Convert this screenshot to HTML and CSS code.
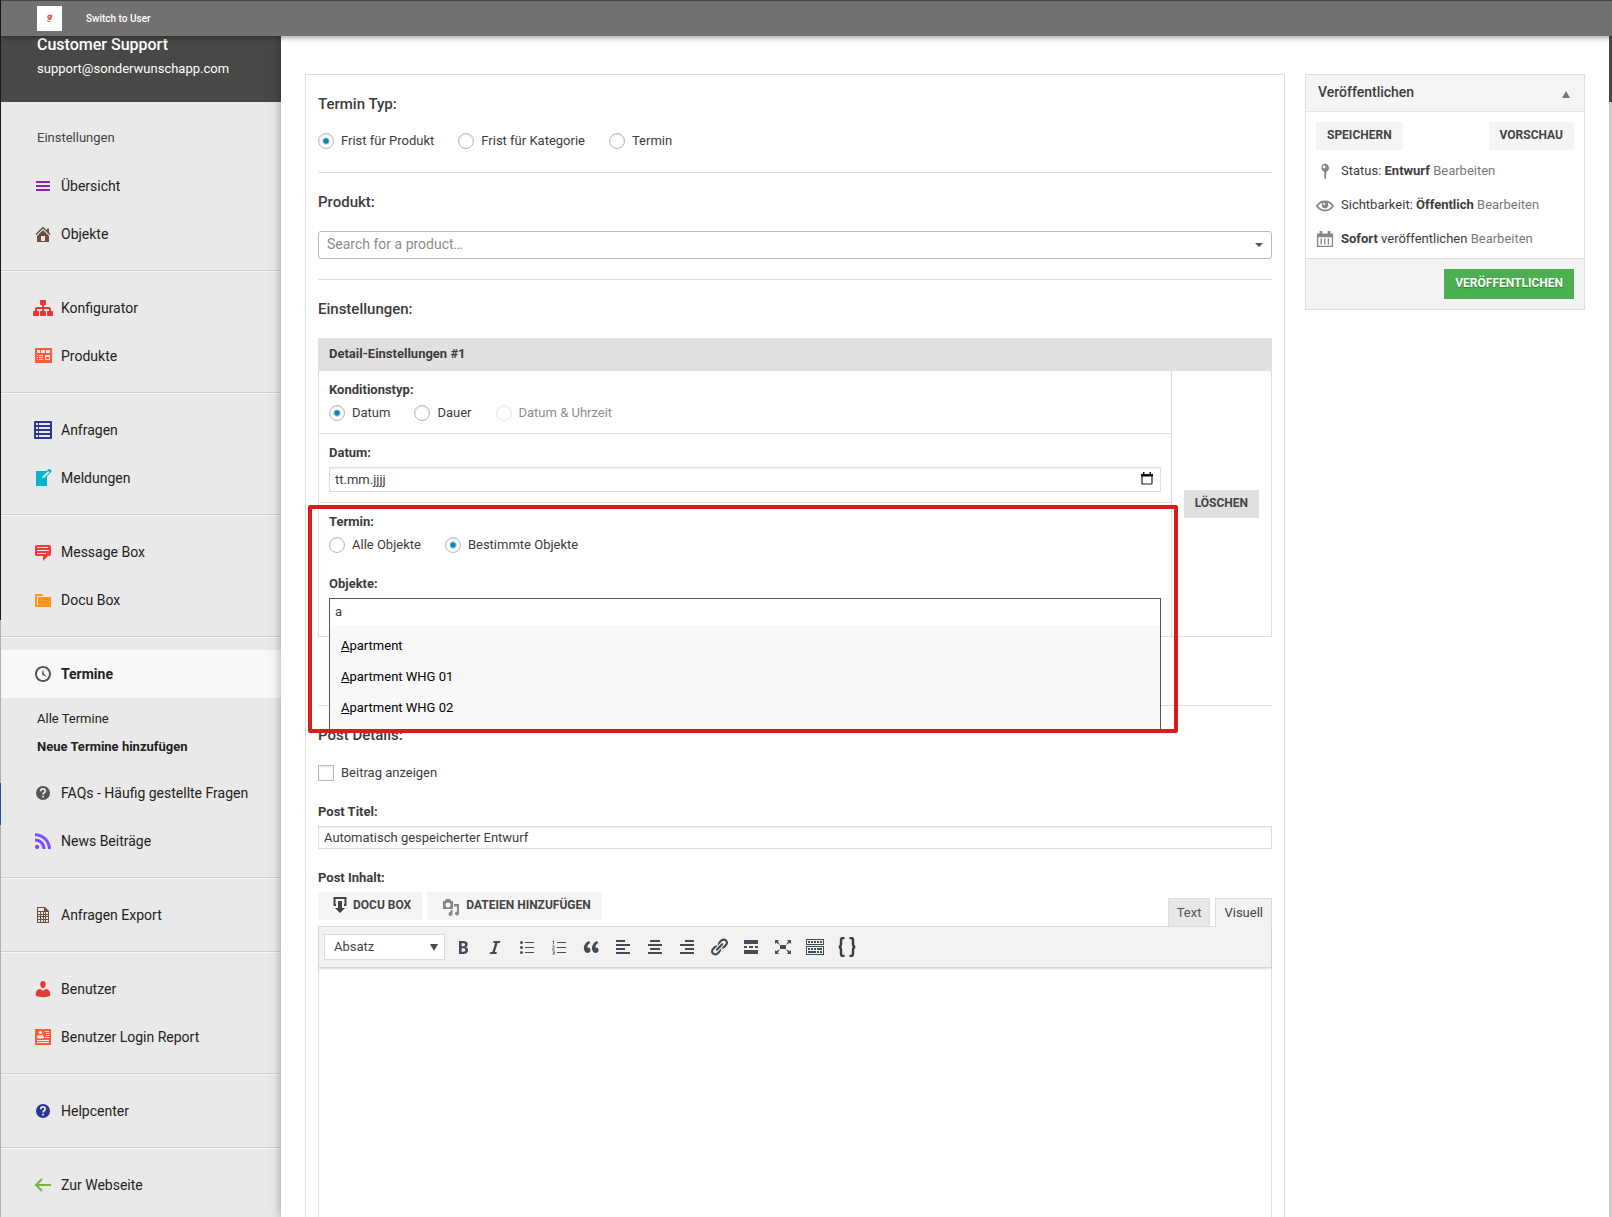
FILE: index.html
```html
<!DOCTYPE html>
<html lang="de">
<head>
<meta charset="utf-8">
<title>Termine</title>
<link rel="stylesheet" href="styles.css">
</head>
<body>
<header class="topbar">
  <a class="logo" href="#" aria-label="Startseite">
    <svg width="25" height="25" viewBox="0 0 25 25"><path d="M10.500 12l1-2.500h3l-.5 2.500-2.500 1" fill="none" stroke="#e5554f" stroke-width="1.400"/><path d="M11 12.500l3-2" stroke="#e5554f"/><path d="M10.500 14.500c1-1.500 3.500-1.500 3.500-.500M10.500 15.500h3" fill="none" stroke="#888" stroke-width="1.100"/></svg>
  </a>
  <a class="switch" href="#">Switch to User</a>
</header>
<div class="app">
  <nav class="sidebar">
    <div class="user">
      <strong class="user-name">Customer Support</strong>
      <span class="user-mail">support@sonderwunschapp.com</span>
    </div>
    <div class="nav-title">Einstellungen</div>
    <div class="group first">
      <a class="item" href="#"><svg class="ico" viewBox="0 0 20 20" fill="#8e24aa"><path d="M3 5h14v2H3zM3 9h14v2H3zM3 13h14v2H3z"/></svg>Übersicht</a>
      <a class="item" href="#"><svg class="ico" viewBox="0 0 20 20" fill="#6d4c41"><path d="M16 8.500l1.530 1.530-1.060 1.060L10 4.600l-6.470 6.490-1.060-1.060L10 2.500l4 4v-2h2v4zm-6-2.460l6 5.990V18H4v-5.970zM12 17v-5H8v5h4z"/></svg>Objekte</a>
    </div>
    <div class="group">
      <a class="item" href="#"><svg class="ico" viewBox="0 0 20 20" fill="#e53935"><path d="M18 13h1c.55 0 1 .45 1 1.010v2.980c0 .56-.45 1.010-1 1.010h-4c-.55 0-1-.45-1-1.010v-2.980c0-.56.45-1.010 1-1.010h1v-2h-5v2h1c.55 0 1 .45 1 1.010v2.980c0 .56-.45 1.010-1 1.010H8c-.55 0-1-.45-1-1.010v-2.980c0-.56.45-1.010 1-1.010h1v-2H4v2h1c.55 0 1 .45 1 1.010v2.980C6 17.550 5.550 18 5 18H1c-.55 0-1-.45-1-1.010v-2.980C0 13.450.45 13 1 13h1v-2c0-1.100.9-2 2-2h5V7H8c-.55 0-1-.45-1-1.010V3.010C7 2.450 7.450 2 8 2h4c.55 0 1 .45 1 1.010v2.980C13 6.550 12.550 7 12 7h-1v2h5c1.100 0 2 .9 2 2v2z"/></svg>Konfigurator</a>
      <a class="item" href="#"><svg class="ico" viewBox="0 0 20 20" fill="#ff5c35" fill-rule="evenodd"><path d="M2 2h17v15H2zM4 4v3h3V4zM8 4v3h4V4zM13 4v3h4V4zM4 9v1h1V9zM6 9v1h4V9zM4 11v1h1v-1zM6 11v1h4v-1zM4 13v1h1v-1zM6 13v1h4v-1zM12 9v5h5V9zM13 11h3v2h-3z"/></svg>Produkte</a>
    </div>
    <div class="group">
      <a class="item" href="#"><svg class="ico" viewBox="0 0 20 20" fill="#283593" fill-rule="evenodd"><path d="M1 2q0-1 1-1h16q1 0 1 1v16q0 1-1 1H2q-1 0-1-1zM3 3v2h2V3zM6 3v2h11V3zM3 7v2h2V7zM6 7v2h11V7zM3 11v2h2v-2zM6 11v2h11v-2zM3 15v2h2v-2zM6 15v2h11v-2z"/></svg>Anfragen</a>
      <a class="item" href="#"><svg class="ico" viewBox="0 0 20 20" fill="#00b4d0"><path d="M16.890 1.200l1.410 1.410c.39.39.39 1.020 0 1.410L14 8.330V18H3V3h10.670l1.800-1.800c.4-.39 1.030-.4 1.420 0zm-5.660 8.480l5.370-5.360-1.420-1.420-5.360 5.370-.71 2.120z"/></svg>Meldungen</a>
    </div>
    <div class="group">
      <a class="item" href="#"><svg class="ico" viewBox="0 0 20 20" fill="#f93a34"><path d="M4 3h12c.55 0 1.020.2 1.410.59S18 4.450 18 5v7c0 .55-.2 1.020-.59 1.410S16.550 14 16 14h-1l-5 5v-5H4c-.55 0-1.020-.2-1.410-.59S2 12.550 2 12V5c0-.55.2-1.020.59-1.410S3.450 3 4 3zm11 2H4v1h11V5zm1 3H4v1h12V8zm-3 3H4v1h9v-1z"/></svg>Message Box</a>
      <a class="item" href="#"><svg class="ico" viewBox="0 0 20 20" fill="#ff9320"><path d="M5 7h13v10H2V4h7l2 2H4v9h1V7z"/></svg>Docu Box</a>
    </div>
    <div class="group">
      <a class="item active" href="#"><svg class="ico" viewBox="0 0 20 20" fill="#555"><path d="M10 2c4.420 0 8 3.580 8 8s-3.580 8-8 8-8-3.580-8-8 3.580-8 8-8zm0 14c3.310 0 6-2.690 6-6s-2.690-6-6-6-6 2.690-6 6 2.690 6 6 6zm-.71-5.290c.07.05.14.1.23.15l-.02.02L14 13l-3.030-3.190L10 5l-.97 4.810h.01c0 .02-.01.05-.02.09S9 9.970 9 10c0 .28.1.52.29.71z"/></svg>Termine</a>
      <div class="submenu">
        <a href="#">Alle Termine</a>
        <a class="current" href="#">Neue Termine hinzufügen</a>
      </div>
      <a class="item" href="#"><svg class="ico" viewBox="0 0 20 20"><circle cx="10" cy="10" r="7" fill="#555"/><path d="M7.700 8.200C7.700 5.200 12.400 5.300 12.300 8c0 1.600-2.200 1.600-2.200 3.400M10.100 12.700v1.700" fill="none" stroke="#e9e9e9" stroke-width="1.800"/></svg>FAQs - Häufig gestellte Fragen</a>
      <a class="item" href="#"><svg class="ico" viewBox="0 0 20 20" fill="#7c4dff"><path d="M14.920 18H18C18 9.320 10.820 2.250 2 2.250v3.020c7.120 0 12.920 5.710 12.920 12.730zm-5.440 0h3.080C12.560 12.270 7.820 7.600 2 7.600v3.020c2 0 3.870.77 5.290 2.160C8.700 14.170 9.480 16.030 9.480 18zm-5.350-.02c1.170 0 2.130-.93 2.130-2.090 0-1.150-.96-2.090-2.130-2.090-1.180 0-2.130.94-2.130 2.090 0 1.160.95 2.090 2.130 2.090z"/></svg>News Beiträge</a>
    </div>
    <div class="group">
      <a class="item" href="#"><svg class="ico" viewBox="0 0 20 20" fill="#6d4c41" fill-rule="evenodd"><path d="M4 2h8l4 4v12H4zM5 3v3h6V3zM5 7v2h2V7zM8 7v2h2V7zM11 7v2h1V7zM13 7v2h2V7zM5 10v1h2v-1zM8 10v1h2v-1zM11 10v1h1v-1zM13 10v1h2v-1zM5 12v2h2v-2zM8 12v2h2v-2zM11 12v2h1v-2zM13 12v2h2v-2zM5 15v2h2v-2zM8 15v2h2v-2zM11 15v2h1v-2zM13 15v2h2v-2z"/></svg>Anfragen Export</a>
    </div>
    <div class="group">
      <a class="item" href="#"><svg class="ico" viewBox="0 0 20 20" fill="#e53935"><path d="M10 9.250c-2.270 0-2.730-3.440-2.730-3.440C7 4.020 7.820 2 9.970 2c2.160 0 2.980 2.020 2.710 3.810 0 0-.41 3.440-2.680 3.440zm0 2.570L12.720 10c2.390 0 4.520 2.330 4.520 4.530v2.490s-3.650 1.130-7.240 1.130c-3.650 0-7.240-1.130-7.240-1.130v-2.490c0-2.250 1.940-4.480 4.470-4.480z"/></svg>Benutzer</a>
      <a class="item" href="#"><svg class="ico" viewBox="0 0 20 20"><path fill="#ff5c35" d="M2 2h16v16H2z"/><g fill="#f5e9e6"><circle cx="7.500" cy="5.500" r="1.700"/><path d="M4 11c0-3 2-3.300 3.500-2.500C9 7.700 11 8 11 11c-2 1-5 1-7 0zM12 4h4v1h-4zM13 6h3v1h-3zM13 8h3v1h-3zM12 10h4v1h-4zM4 13h12v1H4zM4 15h12v1H4z"/></g></svg>Benutzer Login Report</a>
    </div>
    <div class="group">
      <a class="item" href="#"><svg class="ico" viewBox="0 0 20 20"><circle cx="10" cy="10" r="7" fill="#283593"/><path d="M7.700 8.200C7.700 5.200 12.400 5.300 12.300 8c0 1.600-2.200 1.600-2.200 3.400M10.100 12.700v1.700" fill="none" stroke="#e9e9e9" stroke-width="1.800"/></svg>Helpcenter</a>
    </div>
    <div class="group last">
      <a class="item" href="#"><svg class="ico" viewBox="0 0 20 20"><path d="M9 4l-6 6 6 6M3 10h15" fill="none" stroke="#7cb342" stroke-width="2"/></svg>Zur Webseite</a>
    </div>
  </nav>

  <main class="content">
    <section class="panel">
      <h2>Termin Typ:</h2>
      <div class="choices">
        <label><input type="radio" name="typ" checked>Frist für Produkt</label>
        <label><input type="radio" name="typ">Frist für Kategorie</label>
        <label><input type="radio" name="typ">Termin</label>
      </div>
      <hr>
      <h2 id="produkt">Produkt:</h2>
      <div class="product">
        <select aria-labelledby="produkt"><option>Search for a product…</option></select>
        <svg class="caret" width="8" height="4" viewBox="0 0 8 4"><path d="M0 0h8L4 4z" fill="#555"/></svg>
      </div>
      <hr>
      <h2>Einstellungen:</h2>
      <div class="detail">
        <h3>Detail-Einstellungen #1</h3>
        <div class="detail-body">
          <div class="fields">
            <div class="field">
              <div class="label">Konditionstyp:</div>
              <div class="choices">
                <label><input type="radio" name="kond" checked>Datum</label>
                <label><input type="radio" name="kond">Dauer</label>
                <label class="off"><input type="radio" name="kond" disabled>Datum &amp; Uhrzeit</label>
              </div>
            </div>
            <div class="field">
              <label class="label" for="datum">Datum:</label>
              <div class="date">
                <input id="datum" type="text" value="tt.mm.jjjj">
                <svg width="12" height="13" viewBox="0 0 12 13"><path d="M1 2.500h10V11q0 1-1 1H2q-1 0-1-1z" fill="none" stroke="#222" stroke-width="1.200"/><path d="M0 2h12v2.500H0zM2 0h1.500v2H2zM8.500 0H10v2H8.500z" fill="#111"/></svg>
              </div>
            </div>
            <div class="field objects">
              <div class="label">Termin:</div>
              <div class="choices">
                <label><input type="radio" name="obj">Alle Objekte</label>
                <label><input type="radio" name="obj" checked>Bestimmte Objekte</label>
              </div>
              <label class="label second" for="objekte">Objekte:</label>
              <div class="combo">
                <input id="objekte" type="text" value="a">
                <ul class="options">
                  <li><u>A</u>partment</li>
                  <li><u>A</u>partment WHG 01</li>
                  <li><u>A</u>partment WHG 02</li>
                </ul>
              </div>
              <div class="marker"></div>
            </div>
          </div>
          <div class="actions"><button class="btn dark" type="button">Löschen</button></div>
        </div>
      </div>
      <hr class="wide">
      <h2>Post Details:</h2>
      <label class="check"><input type="checkbox">Beitrag anzeigen</label>
      <label class="label" for="titel">Post Titel:</label>
      <input id="titel" class="title" type="text" value="Automatisch gespeicherter Entwurf">
      <label class="label inhalt" for="inhalt">Post Inhalt:</label>
      <div class="media">
        <button class="btn" type="button"><svg width="14" height="18" viewBox="0 0 14 18"><path d="M3 9H1.500V2h11v7H11" fill="none" stroke="#444" stroke-width="2"/><path d="M5 5h4v7h3l-5 5-5-5h3z" fill="#444"/></svg>Docu Box</button>
        <button class="btn" type="button"><svg class="cam" width="18" height="18" viewBox="0 0 18 18"><path fill="#82878c" fill-rule="evenodd" d="M1 3h2l1-2h4l1 2h2v8H1zM6 4.500a2.500 2.500 0 1 0 .01 0z"/><path fill="#82878c" d="M12 6h5v9.500a2 2 0 1 1-2-2V8.500h-3zM10.500 12v4a2 2 0 1 1-2-2V12z"/></svg>Dateien hinzufügen</button>
        <div class="tabs">
          <button class="tab" type="button">Text</button>
          <button class="tab on" type="button">Visuell</button>
        </div>
      </div>
      <div class="editor">
        <div class="toolbar">
          <div class="format">
            <select aria-label="Format"><option>Absatz</option></select>
            <svg class="caret" width="8" height="7" viewBox="0 0 8 7"><path d="M0 0h8L4 7z" fill="#444d55"/></svg>
          </div>
          <button type="button" aria-label="Fett"><svg viewBox="0 0 20 20"><path d="M6 4v13h4.540c1.370 0 2.460-.33 3.260-1 .8-.66 1.200-1.580 1.200-2.770 0-.84-.17-1.510-.51-2.010s-.9-.85-1.670-1.030v-.09c.57-.1 1.020-.4 1.360-.9s.51-1.130.51-1.910c0-1.140-.39-1.980-1.170-2.500C12.750 4.260 11.500 4 9.780 4H6zm2.570 5.150V6.260h1.360c.73 0 1.270.11 1.610.32.34.22.51.58.51 1.070 0 .54-.16.92-.47 1.150s-.82.35-1.510.35h-1.500zm0 2.190h1.600c1.440 0 2.160.53 2.160 1.610 0 .6-.17 1.050-.51 1.340s-.86.43-1.570.43H8.570v-3.380z"/></svg></button>
          <button type="button" aria-label="Kursiv"><svg viewBox="0 0 20 20"><path d="M14.780 6h-2.130l-2.800 9h2.120l-.62 2H4.600l.62-2h2.140l2.800-9H8.030l.62-2h6.750z"/></svg></button>
          <button type="button" aria-label="Liste"><svg viewBox="0 0 20 20"><circle cx="4.500" cy="5.500" r="1.500"/><circle cx="4.500" cy="10.500" r="1.500"/><circle cx="4.500" cy="15.500" r="1.500"/><path d="M8 5h9v1H8zM8 10h9v1H8zM8 15h9v1H8z"/></svg></button>
          <button type="button" aria-label="Nummerierte Liste"><svg viewBox="0 0 20 20"><path d="M8 5h9v1H8zM8 10h9v1H8zM8 15h9v1H8z"/><path d="M3.500 4.500l1-.8V7.500M3.300 9h1.800v1.300L3.300 12h2.200M3.300 13.800h2v1.700H4m1.300 0v1.700h-2" fill="none" stroke="#50575e" stroke-width=".8"/></svg></button>
          <button type="button" aria-label="Zitat"><svg viewBox="0 0 20 20"><path d="M9.490 13.220c0-.74-.2-1.380-.61-1.900-.62-.78-1.830-.88-2.530-.72-.29-1.650 1.110-3.750 2.920-4.650L7.880 4c-2.730 1.300-5.420 4.280-4.960 8.050C3.210 14.430 4.590 16 6.540 16c.85 0 1.560-.25 2.120-.75s.83-1.180.83-2.030zm8.050 0c0-.74-.2-1.380-.61-1.900-.63-.78-1.830-.88-2.530-.72-.29-1.650 1.110-3.750 2.920-4.650L15.930 4c-2.730 1.300-5.410 4.280-4.950 8.050.29 2.380 1.660 3.950 3.610 3.950.85 0 1.560-.25 2.120-.75s.83-1.180.83-2.030z"/></svg></button>
          <button type="button" aria-label="Linksbündig"><svg viewBox="0 0 20 20"><path d="M3 3h9v2H3zM3 7h14v2H3zM3 11h9v2H3zM3 15h14v2H3z"/></svg></button>
          <button type="button" aria-label="Zentriert"><svg viewBox="0 0 20 20"><path d="M5 3h10v2H5zM3 7h14v2H3zM5 11h10v2H5zM3 15h14v2H3z"/></svg></button>
          <button type="button" aria-label="Rechtsbündig"><svg viewBox="0 0 20 20"><path d="M8 3h9v2H8zM3 7h14v2H3zM8 11h9v2H8zM3 15h14v2H3z"/></svg></button>
          <button type="button" aria-label="Link"><svg viewBox="0 0 20 20"><path d="M17.740 2.760c1.680 1.690 1.680 4.410 0 6.100l-1.530 1.520c-1.120 1.120-2.700 1.470-4.140 1.090l2.620-2.610.76-.77.76-.76c.84-.84.84-2.200 0-3.040-.84-.85-2.200-.85-3.040 0l-.77.76-3.380 3.380c-.37-1.440-.02-3.020 1.100-4.140l1.520-1.530c1.690-1.680 4.420-1.680 6.100 0zM8.590 13.430l5.340-5.340c.42-.42.42-1.100 0-1.520-.44-.43-1.130-.39-1.530 0l-5.330 5.340c-.42.42-.42 1.100 0 1.520.44.43 1.130.39 1.520 0zm-.76 2.290l4.140-4.150c.38 1.440.03 3.020-1.090 4.140l-1.520 1.530c-1.690 1.680-4.410 1.680-6.100 0-1.680-1.680-1.680-4.420 0-6.100l1.530-1.520c1.120-1.120 2.700-1.470 4.140-1.100l-4.140 4.150c-.85.84-.85 2.200 0 3.050.84.84 2.200.84 3.040 0z"/></svg></button>
          <button type="button" aria-label="Weiterlesen"><svg viewBox="0 0 20 20"><path d="M17 7V3H3v4h14zM6 11V9H3v2h3zm6 0V9H8v2h4zm5 0V9h-3v2h3zm0 6v-4H3v4h14z"/></svg></button>
          <button type="button" aria-label="Vollbild"><svg viewBox="0 0 20 20"><path d="M7 8h6v4H7zM2 13v4h4l-1.200-1.200L7 12l-3.800 2.200M14 17h4v-4l-1.200 1.200L13 12l2.200 3.800M14 3l1.300 1.300L13 8l3.800-2.200L18 7V3M6 3H2v4l1.200-1.200L7 8 4.700 4.300"/></svg></button>
          <button type="button" aria-label="Werkzeugleiste"><svg viewBox="0 0 20 20"><path d="M19 2v6H1V2h18zm-1 5V3H2v4h16zM5 4v2H3V4h2zm3 0v2H6V4h2zm3 0v2H9V4h2zm3 0v2h-2V4h2zm3 0v2h-2V4h2zm2 5v9H1V9h18zm-1 8v-7H2v7h16zM5 11v2H3v-2h2zm3 0v2H6v-2h2zm3 0v2H9v-2h2zm6 0v2h-5v-2h5zm-6 3v2H3v-2h8zm3 0v2h-2v-2h2zm3 0v2h-2v-2h2z"/></svg></button>
          <button type="button" aria-label="Shortcode"><svg viewBox="0 0 20 20"><path d="M7.500 1H6Q4 1 4 3v4q0 2.500-2 3 2 .5 2 3v4q0 2 2 2h1.500M12.500 1H14q2 0 2 2v4q0 2.500 2 3-2 .5-2 3v4q0 2-2 2h-1.500" fill="none" stroke="#3c3c3c" stroke-width="2.400"/></svg></button>
        </div>
        <textarea id="inhalt"></textarea>
      </div>
    </section>

    <aside class="publish">
      <div class="publish-head"><h2>Veröffentlichen</h2><svg width="8" height="7" viewBox="0 0 8 7"><path d="M4 0l4 7H0z" fill="#72777c"/></svg></div>
      <div class="publish-body">
        <div class="publish-buttons"><button class="btn" type="button">Speichern</button><button class="btn" type="button">Vorschau</button></div>
        <p><svg viewBox="0 0 20 20"><path fill="#82878c" fill-rule="evenodd" d="M10 2a4.500 4.500 0 0 1 1.500 8.700L11 19H9.500L9 10.700A4.500 4.500 0 0 1 10 2zM9 4a1.500 1.500 0 1 0 .01 0z"/></svg><span>Status: <b>Entwurf</b> <a href="#">Bearbeiten</a></span></p>
        <p><svg viewBox="0 0 20 20"><path fill="#82878c" d="M19.700 10.400C17.700 7 14 4.900 10 4.900S2.300 7 .3 10.400L0 11l.3.6c2 3.400 5.700 5.500 9.700 5.500s7.700-2.100 9.700-5.500l.3-.6-.3-.6zM10 15.100c-3.100 0-6-1.600-7.700-4.100C3.600 9 5.700 7.600 8 7.100c-.9.6-1.500 1.700-1.500 2.900 0 1.900 1.600 3.500 3.500 3.500s3.500-1.600 3.500-3.500c0-1.200-.6-2.300-1.500-2.900 2.300.5 4.400 1.900 5.700 3.900-1.700 2.500-4.600 4.100-7.700 4.100z"/><circle cx="10" cy="10" r="3.500" fill="#82878c"/><circle cx="9" cy="9" r="1.200" fill="#fff"/></svg><span>Sichtbarkeit: <b>Öffentlich</b> <a href="#">Bearbeiten</a></span></p>
        <p><svg viewBox="0 0 20 20"><path fill="#82878c" fill-rule="evenodd" d="M1 4h3V1h3v3h6V1h3v3h3v15H1zM2.500 8v9.500h15V8zM5 9.500h1.500V16H5zM9 9.500h1.500V16H9zM13 9.500h1.500V16H13z"/></svg><span><b>Sofort</b> veröffentlichen <a href="#">Bearbeiten</a></span></p>
      </div>
      <div class="publish-foot"><button class="btn green" type="button">Veröffentlichen</button></div>
    </aside>
  </main>
  <div class="edge"></div>
</div>
</body>
</html>
```
FILE: styles.css
```css
* { box-sizing: border-box; }

body {
  margin: 0;
  padding-left: 1px;
  min-height: 100vh;
  display: flex;
  flex-direction: column;
  font: 400 13px/20px Roboto, sans-serif;
  color: #3c3c3c;
  background: linear-gradient(#1b1b1f 620px, #b0b0b0 620px 783px, #1a55a8 783px 825px, #b0b0b0 825px);
}

a { color: inherit; text-decoration: none; }
input, select, textarea, button { font: inherit; color: inherit; margin: 0; border-radius: 0; }
h2, h3, p, ul { margin: 0; padding: 0; }

.topbar {
  position: relative;
  z-index: 5;
  height: 36px;
  padding-left: 36px;
  display: flex;
  align-items: center;
  gap: 24px;
  background: #717171;
  border-top: 1px solid #444;
  box-shadow: 0 2px 5px rgba(0, 0, 0, .35);
}
.logo { display: flex; background: #fff; }
.switch { font-size: 10px; font-weight: 500; color: #fff; }

.app { flex: 1; display: flex; }

/* Sidebar */
.sidebar { width: 280px; background: #e9e9e9; color: #222; }
.user {
  height: 66px;
  padding-left: 36px;
  display: flex;
  flex-direction: column;
  background: #484846;
  color: #fff;
}
.user-name { font-size: 16px; line-height: 18px; font-weight: 500; }
.user-mail { line-height: 30px; }
.nav-title { padding: 24px 36px 12px; line-height: 24px; color: #444; }
.group { padding: 13px 0 12px; border-top: 1px solid #d0d0d0; box-shadow: inset 0 1px #f6f6f6; }
.group.first { border: 0; box-shadow: none; padding-top: 0; }
.group.last { padding-bottom: 8px; }
.item {
  height: 48px;
  padding-left: 32px;
  display: flex;
  align-items: center;
  gap: 8px;
  font-size: 14px;
}
.ico { width: 20px; height: 20px; flex: none; }
.item.active { background: #f8f8f8; font-weight: 700; }
.submenu { padding: 7px 0 8px 36px; line-height: 28px; }
.submenu a { display: block; }
.submenu .current { font-weight: 700; }

/* Content */
.content {
  flex: 1;
  min-width: 0;
  position: relative;
  display: grid;
  grid-template-columns: minmax(0, 1fr) 280px;
  gap: 20px;
  padding: 38px 24px 0;
  background: #fff;
  box-shadow: 0 0 10px rgba(0, 0, 0, .35);
}
.edge { width: 3px; background: linear-gradient(#484846 66px, #ccc 66px); position: relative; }

.panel {
  display: flex;
  flex-direction: column;
  padding: 19px 12px 0;
  border: 1px solid #ddd;
  border-bottom: 0;
}
h2 { font-size: 15px; line-height: 20px; font-weight: 500; }
hr { width: 100%; margin: 20px 0 19px; border: 0; border-top: 1px solid #ddd; }
hr.wide { margin-top: 68px; }

.choices { display: flex; gap: 24px; }
.choices label, .check { display: flex; align-items: center; gap: 7px; }
.panel > .choices { margin-top: 17px; padding-bottom: 1px; }
input[type=radio], input[type=checkbox] {
  appearance: none;
  width: 16px;
  height: 16px;
  border: 1px solid #b4b9be;
  background: #fff;
  box-shadow: inset 0 1px 2px rgba(0, 0, 0, .1);
}
input[type=radio] { border-radius: 50%; }
input[type=radio]:checked { background: radial-gradient(circle, #1580b4 2px, #fff 4px); }
.off { color: #8d8d8d; }
.off input { opacity: .3; }

.product { position: relative; margin-top: 19px; }
.product select {
  display: block;
  width: 100%;
  height: 28px;
  padding: 0 8px 2px;
  appearance: none;
  border: 1px solid #b9b9b9;
  border-radius: 3px;
  background: #fff;
  color: #8d8d8d;
  font-size: 14px;
}
.caret { position: absolute; pointer-events: none; }
.product .caret { right: 9px; top: 12px; }

.detail { margin-top: 19px; }
.detail h3 { padding: 0 11px 2px; font-size: 13px; line-height: 31px; font-weight: 700; background: #e0e0e0; }
.detail-body { display: flex; border: 1px solid #ddd; border-top: 0; }
.fields { flex: 1; border-right: 1px solid #ddd; }
.actions { padding: 0 12px; display: flex; align-items: center; }
.label { display: block; font-weight: 700; line-height: 22px; }
.field { padding: 8px 10px 10px; }
.field + .field { border-top: 1px solid #ddd; }
.field .choices { padding-top: 2px; }
.objects { position: relative; }
.date { position: relative; margin-top: 3px; }
.date input, .title {
  display: block;
  width: 100%;
  height: 25px;
  padding: 0 5px;
  border: 1px solid #ddd;
  box-shadow: inset 0 1px 2px rgba(0, 0, 0, .07);
}
.date svg { position: absolute; right: 8px; top: 5px; }
.label.second { margin-top: 18px; }
.combo { position: relative; margin-top: 3px; padding-bottom: 1px; }
.combo input {
  display: block;
  width: 100%;
  height: 27px;
  padding: 0 5px 2px;
  border: 1px solid #555;
  border-bottom: 0;
  outline: 0;
}
.options {
  position: absolute;
  z-index: 1;
  left: 0;
  right: 0;
  height: 105px;
  padding: 5px 11px;
  list-style: none;
  line-height: 31px;
  color: #000;
  background: #f8f8f8;
  border: solid #555;
  border-width: 0 1px;
}
/* Red frame around the object selection and its open list */
.marker {
  position: absolute;
  z-index: 2;
  inset: 2px -7px auto -11px;
  height: 228px;
  border: 4px solid #dd1b1b;
  border-radius: 2px;
  pointer-events: none;
}

.check { margin: 18px 0; }
.title { height: 23px; margin-top: 3px; }
.inhalt { margin-top: 18px; }
.media { display: flex; align-items: flex-start; gap: 5px; margin-top: 3px; }
.tabs { display: flex; gap: 5px; margin: 6px 0 -1px auto; position: relative; }
.tab { height: 29px; padding: 0 8px; border: 1px solid #ddd; background: #e8e8e8; color: #555; }
.tab.on { background: #f2f2f2; border-bottom-color: #f2f2f2; color: #444; }

.btn {
  height: 28px;
  padding: 0 11px 2px;
  display: flex;
  align-items: center;
  border: 0;
  background: #f5f5f5;
  color: #444;
  font-size: 12px;
  font-weight: 700;
  text-transform: uppercase;
}
.btn.dark { background: #e0e0e0; }
.btn.green { height: 30px; background: #4caf50; color: #fff; text-shadow: 0 1px 1px rgba(0, 0, 0, .3); }
.media .btn svg { margin: 0 6px 0 4px; }
.media .btn .cam { margin-top: 4px; }

.editor { flex: 1; display: flex; flex-direction: column; border: 1px solid #ddd; border-bottom: 0; }
.toolbar {
  height: 41px;
  padding: 0 5px;
  display: flex;
  align-items: center;
  background: #f2f2f2;
  border-bottom: 1px solid #d5d5d5;
  box-shadow: 0 1px 2px rgba(0, 0, 0, .15);
}
.format { position: relative; margin-right: 2px; }
.format select { width: 121px; height: 26px; padding: 0 9px; appearance: none; border: 1px solid #ddd; background: #fff; color: #444; display: block; }
.format .caret { right: 7px; top: 10px; }
.toolbar button { width: 32px; height: 28px; padding: 0 6px; border: 0; background: none; }
.toolbar button svg { width: 20px; height: 20px; display: block; fill: #444d55; }
textarea { flex: 1; min-height: 200px; width: 100%; border: 0; resize: none; background: transparent; display: block; }

/* Publish box */
.publish { align-self: start; border: 1px solid #ddd; }
.publish-head {
  height: 37px;
  padding: 0 14px 2px 12px;
  display: flex;
  align-items: center;
  justify-content: space-between;
  background: #f5f5f5;
  border-bottom: 1px solid #e5e5e5;
}
.publish-head h2 { font-size: 14px; }
.publish-head svg { margin-top: 4px; }
.publish-body { padding: 10px 10px 2px; }
.publish-buttons { display: flex; justify-content: space-between; margin-bottom: 4px; }
.publish p { height: 34px; display: flex; align-items: center; gap: 7px; }
.publish p svg { width: 18px; height: 18px; }
.publish p a { color: #7a7a7a; }
.publish-foot { padding: 10px; display: flex; justify-content: flex-end; background: #f3f3f3; border-top: 1px solid #ddd; }
```
